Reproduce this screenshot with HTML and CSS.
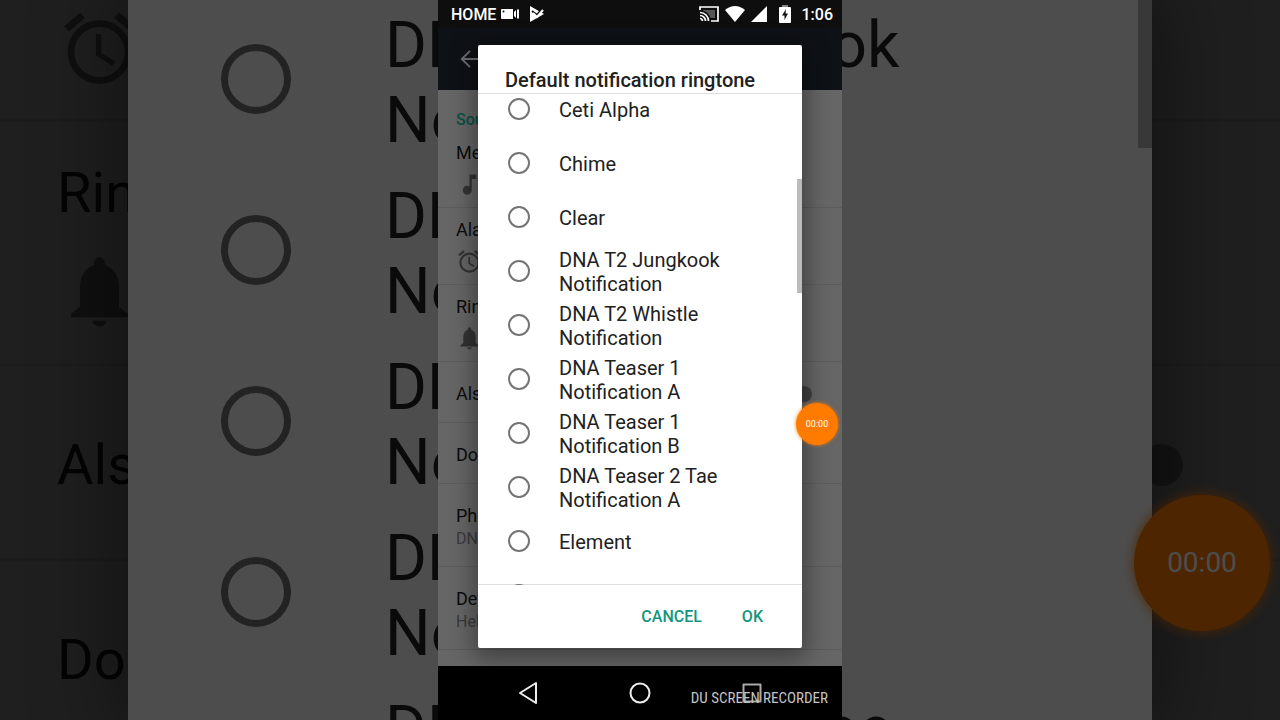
FILE: index.html
```
<!DOCTYPE html>
<html lang="en">
<head>
    <title>Default notification ringtone</title>
    <meta charset="utf-8" />
    <link rel="stylesheet" href="styles.css">
</head>
<body>
    <svg class="defs" width="0" height="0">
        <symbol id="alarm" viewBox="0 0 24 24"><path d="M22 5.7l-4.6-3.9-1.3 1.5 4.6 3.9L22 5.7zM7.9 3.4L6.6 1.9 2 5.7l1.3 1.5 4.6-3.8zM12.5 8H11v6l4.7 2.9.8-1.3-4-2.3V8zM12 4a9 9 0 1 0 0 18 9 9 0 0 0 0-18zm0 16.1a7.1 7.1 0 1 1 0-14.2 7.1 7.1 0 0 1 0 14.2z"/></symbol>
        <symbol id="bell" viewBox="0 0 24 24"><path d="M12 21.600c1.100 0 2-.9 2-1.600h-4c0 .7.9 1.600 2 1.600zM17.500 16V10.500c0-3.100-1.600-5.600-4-6.300V3.500a1.500 1.500 0 0 0-3 0v.7c-2.400.7-4 3.200-4 6.300V16l-2.500 2v1h16v-1z"/></symbol>
        <symbol id="note" viewBox="0 0 24 24"><path d="M12 3v10.600A4 4 0 1 0 14 17V7h4V3h-6z"/></symbol>
    </svg>
    <div id="wrapper">
        <!-- enlarged, dimmed copy behind the phone -->
        <div id="backdrop" aria-hidden="true" inert>
            <div class="settings">
                <div class="row volume"><span>Alarm volume</span><svg><use href="#alarm" /></svg></div>
                <div class="row volume"><span>Ring volume</span><svg><use href="#bell" /></svg></div>
                <div class="row single"><label for="vibrate-back">Also vibrate for calls</label><input type="checkbox" id="vibrate-back" class="switch" /></div>
                <div class="row single"><span>Do not disturb</span></div>
            </div>
            <div class="sheet">
                <label class="option"><input type="radio" name="back" /><span>DNA T2 Jungkook Notification</span></label>
                <label class="option"><input type="radio" name="back" /><span>DNA T2 Whistle Notification</span></label>
                <label class="option"><input type="radio" name="back" /><span>DNA Teaser 1 Notification A</span></label>
                <label class="option"><input type="radio" name="back" /><span>DNA Teaser 1 Notification B</span></label>
                <label class="option"><input type="radio" name="back" /><span>DNA Teaser 2 Tae Notification A</span></label>
                <div class="thumb"></div>
            </div>
            <div class="timer">00:00</div>
        </div>

        <div id="phone">
            <div class="status">
                <span>HOME</span>
                <svg class="camera" width="18" height="12" viewBox="0 0 18 12"><path d="M1 1h11v10H1a1 1 0 0 1-1-1V2a1 1 0 0 1 1-1zM13 4l2-2v8l-2-2zM16 1.500h2v9h-2z"/><circle cx="2.500" cy="3.500" r="1" fill="#111"/></svg>
                <svg class="play" width="16" height="16" viewBox="0 0 16 16"><path d="M1 0l14 8-14 8z"/><path d="M3 5l5 4 5-6" fill="none" stroke="#0e0e0e" stroke-width="2"/><path d="M4 7l4 4 6-7" fill="none" stroke="#fff" stroke-width="2"/></svg>
                <div class="tray">
                    <svg width="20" height="16" viewBox="0 0 20 16"><path d="M1 4V1h18v14h-7M1 12.500a2.500 2.500 0 0 1 2.500 2.500M1 9.500A5.500 5.500 0 0 1 6.500 15M1 6.500A8.500 8.500 0 0 1 9.500 15" fill="none" stroke="#fff" stroke-width="1.700"/><path d="M4 4h12v8h-4.500A11 11 0 0 0 4 4.800z" opacity=".3"/></svg>
                    <svg width="20" height="16" viewBox="0 0 20 16"><path d="M0 4Q10-4 20 4L10 16z"/></svg>
                    <svg width="16" height="16" viewBox="0 0 16 16"><path d="M16 0v16H0z"/></svg>
                    <svg class="battery" width="12" height="18" viewBox="0 0 12 18"><path d="M3 0h6v2H3z" opacity=".5"/><path d="M1 2h10a1 1 0 0 1 1 1v14a1 1 0 0 1-1 1H1a1 1 0 0 1-1-1V3a1 1 0 0 1 1-1z"/><path d="M7 4L3 10.500h2.500V15L9 8.500H6.500z" fill="#111"/></svg>
                    <span>1:06</span>
                </div>
            </div>
            <div class="appbar">
                <button class="back" aria-label="Back"><svg viewBox="0 0 24 24" width="28" height="28"><path d="M22 12H5M12 5l-7 7 7 7" fill="none" stroke="#6b6d70" stroke-width="1.700"/></svg></button>
            </div>
            <div class="settings">
                <h2>Sound</h2>
                <div class="row volume"><span>Media volume</span><svg><use href="#note" /></svg></div>
                <div class="row volume"><span>Alarm volume</span><svg><use href="#alarm" /></svg></div>
                <div class="row volume"><span>Ring volume</span><svg><use href="#bell" /></svg></div>
                <div class="row single"><label for="vibrate">Also vibrate for calls</label><input type="checkbox" id="vibrate" class="switch" /></div>
                <div class="row single"><span>Do not disturb</span></div>
                <div class="row double"><span>Phone ringtone</span><small>DNA Teaser 1</small></div>
                <div class="row double"><span>Default notification ringtone</span><small>Helium</small></div>
            </div>
            <div class="nav">
                <button aria-label="Back"><svg viewBox="0 0 24 24" width="24" height="24"><path d="M20 2v20L4 12z"/></svg></button>
                <button aria-label="Home"><svg viewBox="0 0 24 24" width="24" height="24"><circle cx="12" cy="12" r="9.500"/></svg></button>
                <button aria-label="Recent apps"><svg viewBox="0 0 24 24" width="24" height="24"><path d="M3.500 3.500h17v17h-17z" stroke="#aaa"/></svg></button>
            </div>

            <form class="dialog" role="dialog" aria-labelledby="title">
                <h1 id="title">Default notification ringtone</h1>
                <div class="list">
                    <div class="options">
                        <label class="option"><input type="radio" name="tone" /><span>Ceti Alpha</span></label>
                        <label class="option"><input type="radio" name="tone" /><span>Chime</span></label>
                        <label class="option"><input type="radio" name="tone" /><span>Clear</span></label>
                        <label class="option"><input type="radio" name="tone" /><span>DNA T2 Jungkook Notification</span></label>
                        <label class="option"><input type="radio" name="tone" /><span>DNA T2 Whistle Notification</span></label>
                        <label class="option"><input type="radio" name="tone" /><span>DNA Teaser 1 Notification A</span></label>
                        <label class="option"><input type="radio" name="tone" /><span>DNA Teaser 1 Notification B</span></label>
                        <label class="option"><input type="radio" name="tone" /><span>DNA Teaser 2 Tae Notification A</span></label>
                        <label class="option"><input type="radio" name="tone" /><span>Element</span></label>
                        <label class="option"><input type="radio" name="tone" aria-label="Next ringtone" /></label>
                    </div>
                    <div class="thumb"></div>
                </div>
                <div class="actions">
                    <button type="button">CANCEL</button>
                    <button type="button">OK</button>
                </div>
            </form>
            <div class="timer">00:00</div>
            <div class="watermark">DU SCREEN RECORDER</div>
        </div>
    </div>
</body>
</html>
```
FILE: styles.css
```
* {
    box-sizing: border-box;
}
body {
    margin: 0;
    background-color: #000;
    font-family: Roboto, "Liberation Sans", sans-serif;
}
button {
    padding: 0;
    border: none;
    background: none;
    font-family: inherit;
}
svg {
    display: block;
    fill: #fff;
}
svg.defs {
    position: absolute;
}
div#wrapper {
    display: grid;
    height: 100vh;
    overflow: hidden;
}
div#backdrop, div#phone {
    grid-area: 1 / 1;
    position: relative;
    overflow: hidden;
    min-height: 0;
}
div#phone {
    display: flex;
    flex-direction: column;
    width: 100%;
    max-width: 404px;
    justify-self: center;
    background-color: #666;
}

/* settings list */
.settings {
    flex: 1;
    min-height: 0;
    overflow: hidden;
    background-color: #666;
    color: #0c0c0c;
    font-size: 18px;
    line-height: 24px;
}
    .settings h2 {
        margin: 0;
        padding: 18px 18px 0;
        height: 41px;
        color: #0a5145;
        font-size: 16px;
        font-weight: 500;
    }
.row {
    padding: 0 18px;
    border-bottom: 1px solid #5c5c5c;
}
    .row svg {
        width: 27px;
        height: 27px;
        fill: #333;
    }
    .row.volume {
        display: flex;
        flex-direction: column;
        gap: 6px;
        height: 77px;
        padding-top: 10px;
    }
    .row.single {
        display: flex;
        align-items: center;
        justify-content: space-between;
        height: 61px;
        padding-top: 3px;
    }
    .row.double {
        display: flex;
        flex-direction: column;
        justify-content: center;
        height: 83px;
        padding-top: 4px;
    }
    .row small {
        color: #3a3a3a;
        font-size: 16px;
        line-height: 22px;
    }
input.switch {
    appearance: none;
    width: 16px;
    height: 16px;
    margin: 0 12px 0 0;
    border-radius: 50%;
    background-color: #404040;
}

/* top bars */
.status {
    display: flex;
    align-items: center;
    height: 28px;
    padding: 0 9px 0 13px;
    background-color: #0e0e0e;
    color: #fff;
    font-size: 16px;
    font-weight: 500;
}
    .status .camera {
        margin: 0 10px 0 5px;
    }
.tray {
    display: flex;
    align-items: center;
    gap: 6px;
    margin-left: auto;
}
    .tray .battery {
        margin: 0 5px 0 6px;
    }
.appbar {
    display: flex;
    align-items: center;
    height: 62px;
    padding: 0 18px;
    background-color: #0e1116;
}

/* navigation bar */
.nav {
    display: flex;
    align-items: center;
    justify-content: center;
    gap: 88px;
    height: 54px;
    background-color: #000;
}
    .nav svg {
        fill: none;
        stroke: #eee;
        stroke-width: 2;
        stroke-linejoin: round;
    }

/* ringtone dialog */
.dialog {
    position: absolute;
    top: 45px;
    right: 40px;
    bottom: 72px;
    left: 40px;
    display: flex;
    flex-direction: column;
    border-radius: 2px;
    background-color: #fff;
    box-shadow: 0 6px 24px 4px rgba(0, 0, 0, 0.4);
}
    .dialog h1 {
        margin: 0;
        padding: 23px 27px 1px;
        border-bottom: 1px solid #ddd;
        color: #212121;
        font-size: 20px;
        line-height: 24px;
        font-weight: 500;
    }
.list {
    position: relative;
    flex: 1;
    min-height: 0;
    margin-bottom: -1px;
    overflow: hidden;
}
.options {
    margin-top: -12px;
}
.option {
    display: flex;
    align-items: center;
    gap: 29px;
    height: 54px;
    padding: 0 30px;
    color: #212121;
    font-size: 20px;
    line-height: 24px;
}
    .option span {
        padding-top: 2px;
    }
    .option input {
        appearance: none;
        flex: none;
        width: 22px;
        height: 22px;
        margin: 0;
        border: 2px solid #757575;
        border-radius: 50%;
    }
.thumb {
    position: absolute;
    top: 85px;
    right: 0;
    width: 5px;
    height: 114px;
    background-color: #bbb;
}
.actions {
    display: flex;
    align-items: center;
    justify-content: flex-end;
    gap: 40px;
    height: 64px;
    padding-right: 39px;
    border-top: 1px solid #ddd;
}
    .actions button {
        color: #14967c;
        font-size: 16px;
        line-height: 24px;
        font-weight: 500;
    }

/* screen recorder overlays */
.timer {
    position: absolute;
    top: 403px;
    right: 4px;
    width: 42px;
    height: 42px;
    border-radius: 50%;
    background-color: #ff7b00;
    box-shadow: 0 0 3px 1px rgba(255, 123, 0, 0.6);
    color: #fff;
    font-size: 9px;
    line-height: 42px;
    text-align: center;
}
.watermark {
    position: absolute;
    right: 14px;
    bottom: 12px;
    color: #c4c4c4;
    font-family: "Roboto Condensed", "Liberation Sans Narrow", Roboto, sans-serif;
    font-size: 15px;
    line-height: 20px;
}

/* backdrop sizes */
div#backdrop {
    opacity: 0.3;
}
    #backdrop .settings {
        height: 100%;
        font-size: 56px;
        line-height: 76px;
    }
    #backdrop .row {
        padding: 0 57px;
        border-bottom-width: 3px;
    }
        #backdrop .row svg {
            width: 85px;
            height: 85px;
        }
        #backdrop .row.volume {
            gap: 19px;
            height: 244px;
            padding-top: 33px;
        }
        #backdrop .row.volume:first-child {
            margin-top: -122px;
        }
        #backdrop .row.single {
            height: 195px;
            padding-top: 6px;
        }
    #backdrop input.switch {
        width: 42px;
        height: 42px;
        margin-right: 40px;
    }
.sheet {
    position: absolute;
    top: 0;
    right: 10%;
    bottom: 0;
    left: 10%;
    overflow: hidden;
    background-color: #fff;
    box-shadow: 0 0 76px 12px rgba(0, 0, 0, 0.4);
}
    .sheet .option {
        gap: 94px;
        height: 171px;
        padding: 0 93px;
        font-size: 64px;
        line-height: 75px;
    }
        .sheet .option:first-child {
            margin-top: -7px;
        }
        .sheet .option span {
            padding-top: 8px;
        }
        .sheet .option input {
            width: 70px;
            height: 70px;
            border-width: 7px;
        }
    .sheet .thumb {
        top: 0;
        width: 14px;
        height: 148px;
    }
#backdrop .timer {
    top: 495px;
    right: 10px;
    width: 136px;
    height: 136px;
    box-shadow: 0 0 10px 3px rgba(255, 123, 0, 0.6);
    font-size: 28px;
    line-height: 136px;
}
```
